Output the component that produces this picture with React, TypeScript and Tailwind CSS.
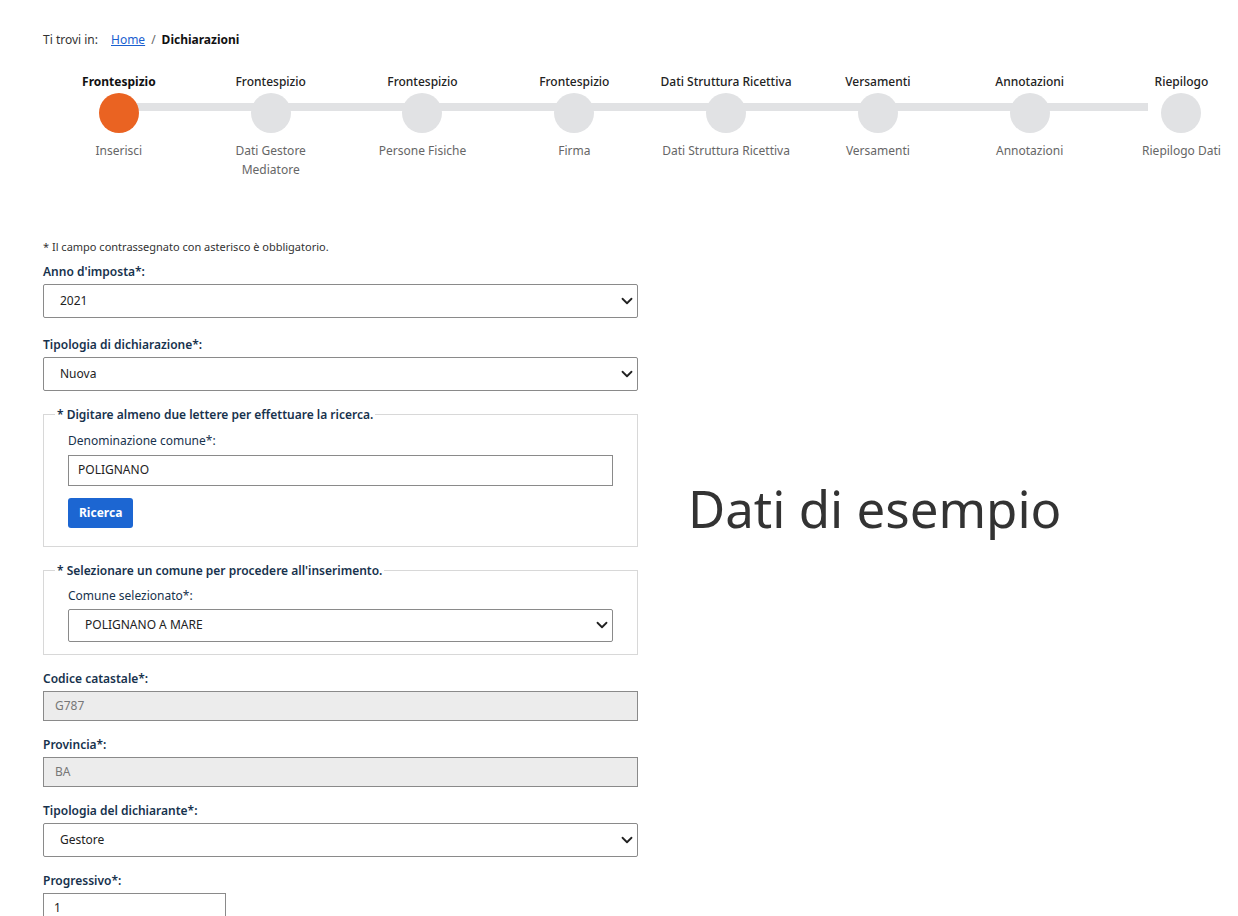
const steps = [
  ["Frontespizio", "Inserisci"],
  ["Frontespizio", "Dati Gestore Mediatore"],
  ["Frontespizio", "Persone Fisiche"],
  ["Frontespizio", "Firma"],
  ["Dati Struttura Ricettiva", "Dati Struttura Ricettiva"],
  ["Versamenti", "Versamenti"],
  ["Annotazioni", "Annotazioni"],
  ["Riepilogo", "Riepilogo Dati"],
];

const Chevron = () => (
  <svg width="12" height="12" viewBox="0 0 16 16" className="absolute right-[4px] top-1/2 -translate-y-1/2">
    <path d="M2 5l6 6 6-6" fill="none" stroke="#222" strokeWidth="2.4" strokeLinecap="round" strokeLinejoin="round" />
  </svg>
);

function Select({ value, h = "h-[34px]", pl = "pl-4" }: { value: string; h?: string; pl?: string }) {
  return (
    <div className={`relative border border-[#8a8a8a] rounded-[2px] ${h} flex items-center ${pl} text-[12px] text-[#222] bg-white`}>
      {value}
      <Chevron />
    </div>
  );
}

function Label({ children }: { children: React.ReactNode }) {
  return <div className="text-[12px] leading-[16px] font-semibold text-[#17324d] mb-[4px]">{children}</div>;
}

export default function App() {
  return (
    <div className="w-[1238px] h-[916px] bg-white overflow-hidden relative" style={{ fontFamily: "'Noto Sans', 'Open Sans', sans-serif" }}>
      <div className="pt-[31px] pl-[43px] text-[12px] flex items-center">
        <span className="text-[#333]">Ti trovi in:</span>
        <a className="ml-[13px] text-[#1a5fd0] underline">Home</a>
        <span className="mx-[6px] text-[#666]">/</span>
        <span className="font-bold text-[#111]">Dichiarazioni</span>
      </div>

      <div className="relative flex ml-[43px] mt-[24px]">
        <div className="absolute left-[75px] right-[90px] top-[30px] h-[8px] bg-[#e1e2e4]" />
        {steps.map(([t, s], i) => (
          <div key={i} className="w-[151.8px] shrink-0 flex flex-col items-center text-center relative">
            <div className={`text-[12px] h-[16px] whitespace-nowrap ${i === 0 ? "font-bold text-[#111]" : "text-[#222] font-medium"}`}>{t}</div>
            <div className={`mt-[4px] w-[40px] h-[40px] rounded-full ${i === 0 ? "bg-[#ea6322]" : "bg-[#e1e2e4]"}`} />
            <div className="mt-[8px] text-[12px] leading-[19px] text-[#666] w-[145px]">{i === 1 ? <>Dati Gestore<br />Mediatore</> : s}</div>
          </div>
        ))}
      </div>

      <div className="absolute left-[688px] top-[470px] text-[51px] text-[#333]">Dati di esempio</div>

      <div className="ml-[43px] mt-[60px] w-[595px]">
        <div className="text-[11px] text-[#333] mb-[8px]">* Il campo contrassegnato con asterisco è obbligatorio.</div>
        <Label>Anno d'imposta*:</Label>
        <Select value="2021" />
        <div className="h-[19px]" />
        <Label>Tipologia di dichiarazione*:</Label>
        <Select value="Nuova" />

        <fieldset className="mt-[15px] border border-[#d8d8d8] px-[24px] pb-[18px] pt-[2px]">
          <legend className="text-[12px] font-semibold text-[#17324d] -ml-[13px] px-[2px]">* Digitare almeno due lettere per effettuare la ricerca.</legend>
          <div className="text-[12px] text-[#17324d] mt-[6px] mb-[5px]">Denominazione comune*:</div>
          <div className="border border-[#8a8a8a] h-[31px] flex items-center pl-[9px] text-[12px] text-[#222]">POLIGNANO</div>
          <button className="mt-[12px] bg-[#1c66d2] text-white text-[12px] font-bold rounded-[3px] h-[30px] px-[11px]">Ricerca</button>
        </fieldset>

        <fieldset className="mt-[15px] border border-[#d8d8d8] px-[24px] pb-[12px] pt-[2px]">
          <legend className="text-[12px] font-semibold text-[#17324d] -ml-[13px] px-[2px]">* Selezionare un comune per procedere all'inserimento.</legend>
          <div className="text-[12px] text-[#17324d] mt-[5px] mb-[4px]">Comune selezionato*:</div>
          <Select value="POLIGNANO A MARE" h="h-[33px]" />
        </fieldset>

        <div className="h-[16px]" />
        <Label>Codice catastale*:</Label>
        <div className="border border-[#8a8a8a] bg-[#ececec] h-[30px] flex items-center pl-[11px] text-[12px] text-[#777]">G787</div>
        <div className="h-[16px]" />
        <Label>Provincia*:</Label>
        <div className="border border-[#8a8a8a] bg-[#ececec] h-[30px] flex items-center pl-[11px] text-[12px] text-[#777]">BA</div>
        <div className="h-[16px]" />
        <Label>Tipologia del dichiarante*:</Label>
        <Select value="Gestore" />
        <div className="h-[16px]" />
        <Label>Progressivo*:</Label>
        <div className="border border-[#8a8a8a] w-[183px] h-[30px] flex items-center pl-[10px] text-[12px] text-[#222]">1</div>
      </div>
    </div>
  );
}
